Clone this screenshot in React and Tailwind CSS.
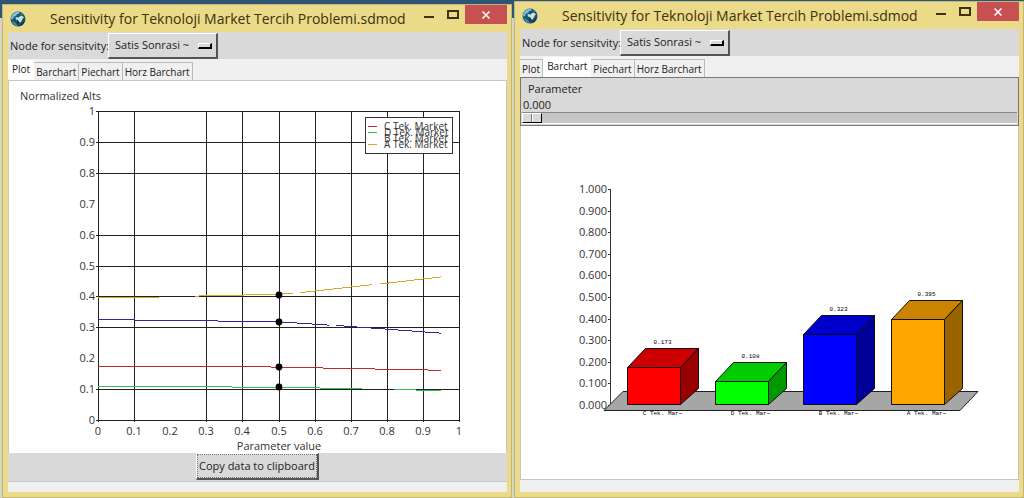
import { useState } from 'react';

const TABS = ['Plot', 'Barchart', 'Piechart', 'Horz Barchart'];

const STEPS = [0, 1, 2, 3, 4, 5, 6, 7, 8, 9, 10];

// Each series is a list of segments, every segment a list of [parameter, value]
const SERIES = [
  {
    name: 'C Tek. Market',
    color: '#c0282d',
    mark: 0.171,
    segments: [[[0, 0.174], [0.42, 0.173], [0.5, 0.171], [0.95, 0.161]]],
  },
  {
    name: 'D Tek. Market',
    color: '#2fc14a',
    mark: 0.107,
    segments: [[[0, 0.109], [0.5, 0.106], [0.73, 0.101]], [[0.82, 0.098], [0.95, 0.096]]],
  },
  {
    name: 'B Tek. Market',
    color: '#2a2a9c',
    mark: 0.317,
    segments: [[[0, 0.325], [0.5, 0.318], [0.64, 0.307]], [[0.66, 0.306], [0.95, 0.281]]],
  },
  {
    name: 'A Tek. Market',
    color: '#dba52c',
    mark: 0.406,
    segments: [
      [[0, 0.396], [0.17, 0.397]],
      [[0.27, 0.401], [0.5, 0.407], [0.54, 0.411]],
      [[0.56, 0.412], [0.76, 0.438]],
      [[0.78, 0.44], [0.95, 0.463]],
    ],
  },
];

const BARS = [
  { name: 'C Tek. Mar~', value: 0.173, front: '#ff0000', top: '#cc0000', side: '#990000' },
  { name: 'D Tek. Mar~', value: 0.108, front: '#00ff00', top: '#00cc00', side: '#009900' },
  { name: 'B Tek. Mar~', value: 0.323, front: '#0000ff', top: '#0000cc', side: '#000099' },
  { name: 'A Tek. Mar~', value: 0.395, front: '#ffa500', top: '#cc8400', side: '#996300' },
];

function GlobeIcon() {
  return (
    <svg className="h-4 w-4 shrink-0" viewBox="0 0 16 16" aria-hidden="true">
      <circle cx="8" cy="8" r="7.5" fill="#1d5470" />
      <path d="M1.5 5.5C3 2 6.5 .6 9 .9L9.5 2.5 7 3.2 6 5 4 5.5 3 8 1 8.5Z" fill="#7cc4d4" />
      <path d="M5.5 6l3 .5L11 4.5l3 1.5L12.5 8l-1.5 3-1.5.5L8 9 6 8.5Z" fill="#c4e4ea" />
      <path d="M1.5 10l2.5 1 2.5 2 .5 2-2.5-.7Z" fill="#3f93ab" />
      <path d="M10.5 1.2l3.5 3-2-.6Z" fill="#59b7b0" />
      <path d="M8.5 15.4l3-3 2.5-2.4 1-.5-2.5 4.5Z" fill="#12303f" />
      <path d="M7.5 10l1.5 1-.5 2.5L7 12Z" fill="#0e2836" />
    </svg>
  );
}

function TitleBar({ title }) {
  return (
    <div className="flex h-[27px] items-start">
      <div className="flex h-[27px] items-center pl-0.5">
        <GlobeIcon />
      </div>
      <h1 className="min-w-0 flex-1 truncate pl-6 text-[14px] leading-[27px] text-[#3a3210]">
        {title}
      </h1>
      <button aria-label="Minimize" className="flex h-5 w-6 items-center justify-center">
        <svg className="h-3 w-3" viewBox="0 0 12 12">
          <rect x="1" y="7" width="10" height="2" fill="#3a3210" />
        </svg>
      </button>
      <button aria-label="Maximize" className="flex h-5 w-6 items-center justify-center">
        <svg className="h-3 w-3" viewBox="0 0 12 12">
          <path d="M1 2h10v7H1z" fill="none" stroke="#3a3210" strokeWidth="2" />
        </svg>
      </button>
      <button aria-label="Close" className="flex h-[19px] w-[42px] items-center justify-center bg-[#c75050]">
        <svg className="h-2 w-2" viewBox="0 0 8 8">
          <path d="M.5 .5l7 7M7.5 .5l-7 7" stroke="#fff" strokeWidth="1.5" />
        </svg>
      </button>
    </div>
  );
}

function NodePicker({ id }) {
  return (
    <div className="flex h-[27px] items-center bg-[#d9d9d9] pl-0.5">
      <label htmlFor={id} className="w-[98px] whitespace-nowrap">
        Node for sensitvity:
      </label>
      <div className="relative">
        <select
          id={id}
          className="block h-[26px] w-[110px] appearance-none border-t border-r-2 border-b-2 border-l border-t-white border-r-[#555] border-b-[#555] border-l-white bg-[#d9d9d9] pl-1.5"
        >
          <option>Satis Sonrasi ~</option>
        </select>
        <span className="pointer-events-none absolute top-2.5 right-1.5 h-1.5 w-3.5 border-t border-r-2 border-b-2 border-l border-t-white border-r-black border-b-black border-l-white bg-[#d9d9d9]" />
      </div>
    </div>
  );
}

function PlotView() {
  const x = (v) => Math.round(89 + v * 361);
  const y = (v) => Math.round(339 - v * 309);
  // grid lines at 0.2 and the 0.7 row are not drawn
  const columns = STEPS.filter((n) => n !== 2);
  const rows = STEPS.filter((n) => n !== 2 && n !== 7);

  return (
    <div className="flex flex-col">
      <div className="border border-b-0 border-[#c8c8c8] bg-white">
        <svg className="block h-auto w-full" viewBox="0 0 497 372" fontSize="11" fill="#333">
          <text x="11" y="19">Normalized Alts</text>
          <g stroke="#222" shapeRendering="crispEdges">
            {columns.map((n) => (
              <line key={n} x1={x(n / 10)} x2={x(n / 10)} y1={y(1)} y2={y(0) + 2} />
            ))}
            {rows.map((n) => (
              <line key={n} x1={x(0) - 2} x2={x(1)} y1={y(n / 10)} y2={y(n / 10)} />
            ))}
          </g>
          {STEPS.map((n) => (
            <g key={n}>
              <text x={x(n / 10)} y={y(0) + 15} textAnchor="middle">{n / 10}</text>
              <text x={x(0) - 3} y={y(n / 10) + 4} textAnchor="end">{n / 10}</text>
            </g>
          ))}
          <text x={x(0.5)} y="369" textAnchor="middle">Parameter value</text>

          {SERIES.map((s) => (
            <g key={s.name}>
              {s.segments.map((points, i) => (
                <polyline
                  key={i}
                  points={points.map(([px, py]) => `${89 + px * 361},${339 - py * 309}`).join(' ')}
                  fill="none"
                  stroke={s.color}
                  shapeRendering="crispEdges"
                />
              ))}
              <circle cx={x(0.5)} cy={y(s.mark)} r="3.4" fill="#000" />
            </g>
          ))}

          {/* Legend */}
          <rect x="356.5" y="36.5" width="87" height="36" fill="#fff" stroke="#333" />
          {SERIES.map((s, i) => (
            <g key={s.name}>
              {i !== 2 && (
                <line
                  x1="359"
                  x2="368"
                  y1={45 + i * 6}
                  y2={45 + i * 6}
                  stroke={s.color}
                  shapeRendering="crispEdges"
                />
              )}
              <text x="375" y={49 + i * 6} fontSize="10">{s.name}</text>
            </g>
          ))}
        </svg>
      </div>
      <div className="flex h-[29px] justify-center border-b border-[#c4c4d0] bg-[#d9d9d9]">
        <button className="h-[27px] border-t border-r-2 border-b-2 border-l border-t-white border-r-[#555] border-b-[#555] border-l-white">
          <span className="block border border-dotted border-[#777] px-px leading-[22px]">
            Copy data to clipboard
          </span>
        </button>
      </div>
    </div>
  );
}

function BarchartView() {
  const [parameter, setParameter] = useState(0);
  const base = 278;

  return (
    <div>
      <div className="border border-[#777] bg-[#d9d9d9] p-px">
        <label htmlFor="parameter" className="block pt-px pl-1.5 leading-[18px]">
          Parameter
        </label>
        <output htmlFor="parameter" className="block pl-px leading-[14px]">
          {parameter.toFixed(3)}
        </output>
        <input
          id="parameter"
          type="range"
          min="0"
          max="1"
          step="0.001"
          value={parameter}
          onChange={(e) => setParameter(Number(e.target.value))}
          className="block h-3 w-full appearance-none border-t border-b border-t-[#888] border-b-white bg-[#c6c6c6] [&::-webkit-slider-thumb]:h-2.5 [&::-webkit-slider-thumb]:w-5 [&::-webkit-slider-thumb]:appearance-none [&::-webkit-slider-thumb]:border [&::-webkit-slider-thumb]:border-t-white [&::-webkit-slider-thumb]:border-r-black [&::-webkit-slider-thumb]:border-b-black [&::-webkit-slider-thumb]:border-l-white [&::-webkit-slider-thumb]:bg-[linear-gradient(90deg,#d9d9d9_8px,#777_8px,#777_9px,#fff_9px,#fff_10px,#d9d9d9_10px)]"
        />
      </div>
      <div className="border border-t-0 border-[#c4c4c4] bg-white">
        <svg className="block h-auto w-full" viewBox="0 0 497 353" fontSize="11" fill="#333">
          {STEPS.map((n) => (
            <g key={n}>
              <text x="86" y={base + 5 - Math.round(n * 21.6)} textAnchor="end">
                {(n / 10).toFixed(3)}
              </text>
              <line
                x1="87"
                x2="89"
                y1={base + 1 - Math.round(n * 21.6)}
                y2={base + 1 - Math.round(n * 21.6)}
                stroke="#333"
                shapeRendering="crispEdges"
              />
            </g>
          ))}
          <path d="M83 284.5L102 265.5H457L439 284.5Z" fill="#a6a6a6" stroke="#222" />
          <line x1="89" x2="89" y1="63" y2={base} stroke="#333" shapeRendering="crispEdges" />

          {BARS.map((bar, i) => {
            const left = 106.5 + i * 88;
            const right = left + 53;
            const bottom = base + 0.5;
            const top = bottom - Math.round(bar.value * 216);
            return (
              <g key={bar.name}>
                <g stroke="#111" strokeLinejoin="round">
                  <path d={`M${left} ${top}l18-19h53l-18 19Z`} fill={bar.top} />
                  <path d={`M${right} ${top}l18-19V${bottom - 16}L${right} ${bottom}Z`} fill={bar.side} />
                  <path d={`M${left} ${top}H${right}V${bottom}H${left}Z`} fill={bar.front} />
                </g>
                <g fontFamily="Liberation Mono, monospace" fontSize="6" textAnchor="middle" fill="#000">
                  <text x={left + 35} y={top - 24}>{bar.value.toFixed(3)}</text>
                  <text x={left + 35} y="289">{bar.name}</text>
                </g>
              </g>
            );
          })}
        </svg>
      </div>
    </div>
  );
}

function SensitivityWindow({ id, initialTab }) {
  const [tab, setTab] = useState(initialTab);

  return (
    <section className="ml-0.5 flex flex-1 flex-col border border-[#c2b57c] bg-[#ebda87] pr-1 pb-[5px] pl-[5px]">
      <TitleBar title="Sensitivity for Teknoloji Market Tercih Problemi.sdmod" />
      <div className="flex flex-1 flex-col bg-[#f0f0f0]">
        <NodePicker id={id} />
        <div role="tablist" className="flex h-[21px] items-end text-[10px]">
          {TABS.map((name) => (
            <button
              key={name}
              role="tab"
              aria-selected={tab === name}
              onClick={() => setTab(name)}
              className={
                tab === name
                  ? 'h-5 bg-white px-1 pb-0.5'
                  : 'h-[18px] border border-b-0 border-l-0 border-[#bbb] px-0.5'
              }
            >
              {name}
            </button>
          ))}
        </div>
        {tab === 'Plot' && <PlotView />}
        {tab === 'Barchart' && <BarchartView />}
      </div>
    </section>
  );
}

export default function App() {
  return (
    <div className="grid min-h-screen grid-cols-2 bg-[linear-gradient(#2f5575_18px,#d8d4c4_18px)] font-['Open_Sans','Noto_Sans',sans-serif] text-[11px] leading-4 text-[#222]">
      <div className="flex flex-col pt-1">
        <SensitivityWindow id="node-left" initialTab="Plot" />
      </div>
      <div className="flex flex-col pt-px">
        <SensitivityWindow id="node-right" initialTab="Barchart" />
      </div>
    </div>
  );
}
